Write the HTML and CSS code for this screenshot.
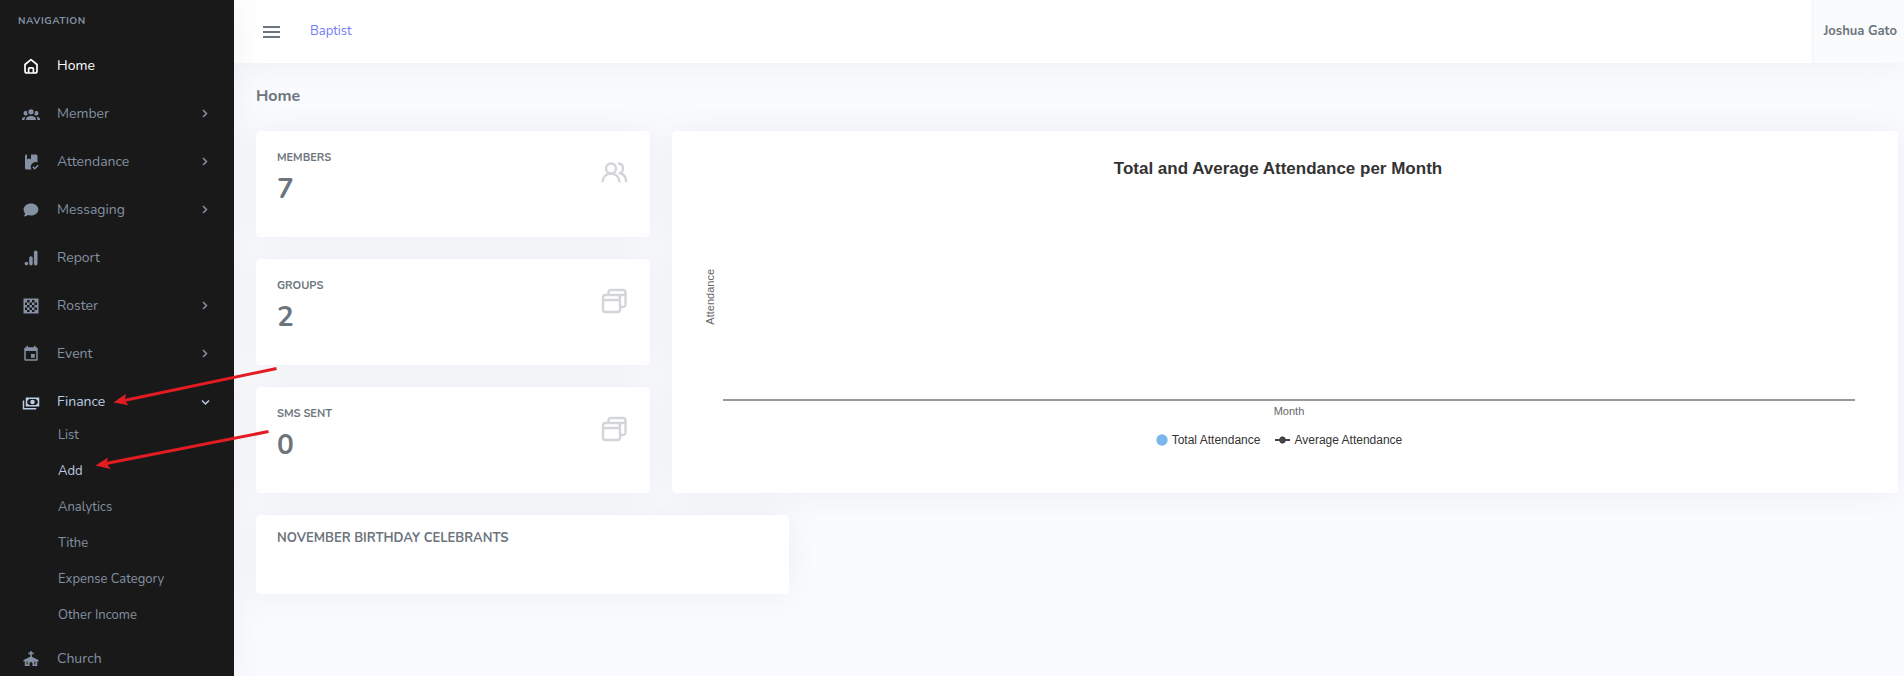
FILE: index.html
```html
<!DOCTYPE html>
<html lang="en">
<head>
<meta charset="utf-8">
<title>Home</title>
<link rel="stylesheet" href="styles.css">
</head>
<body>
<div class="app">
  <nav class="sidebar" aria-label="Navigation">
    <h2 class="nav-title">Navigation</h2>
    <ul class="nav">
      <li><a class="nav-item current" href="#">
        <svg class="icon" viewBox="0 0 18 18" fill="none" stroke="currentColor" stroke-width="1.7" stroke-linejoin="round"><path d="M3 7.500 9 2.600l6 4.900V14a2 2 0 0 1-2 2H5a2 2 0 0 1-2-2z"/><path d="M6.600 16v-4.200a1 1 0 0 1 1-1h2.800a1 1 0 0 1 1 1V16"/></svg>
        <span class="label">Home</span></a></li>
      <li><a class="nav-item" href="#">
        <svg class="icon" viewBox="0 0 24 24" fill="currentColor"><path d="M12 5.500A3.500 3.500 0 0 1 15.500 9 3.500 3.500 0 0 1 12 12.500 3.500 3.500 0 0 1 8.500 9 3.500 3.500 0 0 1 12 5.500M5 8c.56 0 1.080.15 1.530.42-.15 1.430.27 2.850 1.130 3.960C7.160 13.340 6.160 14 5 14a3 3 0 0 1 0-6m14 0a3 3 0 0 1 0 6c-1.160 0-2.160-.66-2.660-1.620.86-1.110 1.280-2.530 1.130-3.960C17.920 8.150 18.440 8 19 8M5.500 18.250c0-2.070 2.910-3.750 6.500-3.750s6.500 1.680 6.500 3.750V20h-13zM0 20v-1.500c0-1.390 1.890-2.560 4.450-2.900-.59.68-.95 1.620-.95 2.650V20zm24 0h-3.500v-1.750c0-1.030-.36-1.970-.95-2.650 2.560.34 4.450 1.510 4.450 2.900z"/></svg>
        <span class="label">Member</span>
        <svg class="chevron" viewBox="0 0 12 12"><path d="m4 2 3.500 3.500L4 9"/></svg></a></li>
      <li><a class="nav-item" href="#">
        <svg class="icon" viewBox="0 0 18 18" fill="currentColor"><path d="M4.500 1.500H5v5l2-1.300 2 1.300v-5h5a1.500 1.500 0 0 1 1.500 1.500v6.300a5 5 0 0 0-6 7.200h-5A1.500 1.500 0 0 1 3 15V3a1.500 1.500 0 0 1 1.500-1.500z"/><path d="m10.800 13.800 1.900 1.900 3.500-3.500" fill="none" stroke="currentColor" stroke-width="1.500"/></svg>
        <span class="label">Attendance</span>
        <svg class="chevron" viewBox="0 0 12 12"><path d="m4 2 3.500 3.500L4 9"/></svg></a></li>
      <li><a class="nav-item" href="#">
        <svg class="icon" viewBox="0 0 18 18" fill="currentColor"><path d="M9 2.500c4.200 0 7.400 2.700 7.400 6s-3.200 6-7.400 6c-1 0-2-.2-2.900-.5-1.100.9-2.600 1.400-4.500 1.500.9-1 1.400-2 1.500-3.100C2.200 11.400 1.600 10 1.600 8.500c0-3.300 3.200-6 7.400-6z"/></svg>
        <span class="label">Messaging</span>
        <svg class="chevron" viewBox="0 0 12 12"><path d="m4 2 3.500 3.500L4 9"/></svg></a></li>
      <li><a class="nav-item" href="#">
        <svg class="icon" viewBox="0 0 18 18" fill="currentColor"><circle cx="4.400" cy="14.600" r="1.800"/><rect x="7.200" y="7.300" width="3.500" height="9.200" rx="1.700"/><rect x="11.900" y="1.500" width="3.600" height="15" rx="1.700"/></svg>
        <span class="label">Report</span></a></li>
      <li><a class="nav-item" href="#">
        <svg class="icon" viewBox="0 0 18 18" fill="currentColor"><path fill-rule="evenodd" d="M1.500 1.500h15v15h-15zM5 3h2.500v2.500H5zM10 3h2.500v2.500H10zM3 5.500h2V8H3zM7.500 5.500H10V8H7.500zM12.500 5.500H15V8h-2.500zM5 8h2.500v2.500H5zM10 8h2.500v2.500H10zM3 10.500h2V13H3zM7.500 10.500H10V13H7.500zM12.500 10.500H15V13h-2.500zM5 13h2.500v2H5zM10 13h2.500v2H10z"/></svg>
        <span class="label">Roster</span>
        <svg class="chevron" viewBox="0 0 12 12"><path d="m4 2 3.500 3.500L4 9"/></svg></a></li>
      <li><a class="nav-item" href="#">
        <svg class="icon" viewBox="0 0 24 24" fill="currentColor"><path d="M19 19H5V8h14M16 1v2H8V1H6v2H5a2 2 0 0 0-2 2v14a2 2 0 0 0 2 2h14a2 2 0 0 0 2-2V5a2 2 0 0 0-2-2h-1V1m-1 11h-5v5h5z"/></svg>
        <span class="label">Event</span>
        <svg class="chevron" viewBox="0 0 12 12"><path d="m4 2 3.500 3.500L4 9"/></svg></a></li>
      <li><a class="nav-item open" href="#" aria-expanded="true">
        <svg class="icon" viewBox="0 0 24 24" fill="currentColor"><path d="M5 6h18v12H5zm9 3a3 3 0 0 1 0 6 3 3 0 0 1 0-6M9 8a2 2 0 0 1-2 2v4a2 2 0 0 1 2 2h10a2 2 0 0 1 2-2v-4a2 2 0 0 1-2-2zm-8 2h2v10h16v2H1z"/></svg>
        <span class="label">Finance</span>
        <svg class="chevron" viewBox="0 0 12 12"><path d="M3 4.500 6.500 8 10 4.500"/></svg></a>
        <ul class="subnav">
          <li><a href="#">List</a></li>
          <li><a class="hover" href="#">Add</a></li>
          <li><a href="#">Analytics</a></li>
          <li><a href="#">Tithe</a></li>
          <li><a href="#">Expense Category</a></li>
          <li><a href="#">Other Income</a></li>
        </ul></li>
      <li><a class="nav-item" href="#">
        <svg class="icon" viewBox="0 0 18 18" fill="currentColor"><path d="M8.200 1h1.600v1.600h1.800v1.600H9.800v2.500l6.700 3.300v1.800l-1.300-.5V16h-4.700v-2.500a1.500 1.500 0 0 0-3 0V16H2.800v-4.700l-1.300.5V10l6.700-3.300V4.200H6.400V2.600h1.800z"/><path d="M4.600 11.500h1v3h-1zM12.400 11.500h1v3h-1z" fill="#191919"/></svg>
        <span class="label">Church</span></a></li>
    </ul>
  </nav>

  <div class="page">
    <header class="topbar">
      <button class="menu-button" type="button" aria-label="Toggle menu">
        <svg viewBox="0 0 17 12" fill="currentColor"><path d="M0 0h17v2H0zm0 5h17v2H0zm0 5h17v2H0z"/></svg>
      </button>
      <a class="brand" href="#">Baptist</a>
      <a class="user" href="#">Joshua Gato</a>
    </header>

    <main class="content">
      <h1 class="page-title">Home</h1>
      <div class="grid">
        <div class="stats">
          <section class="card stat">
            <div><h2 class="stat-title">Members</h2><p class="stat-value">7</p></div>
            <svg class="stat-icon" viewBox="0 0 28 28"><circle cx="11" cy="10.500" r="5"/><path d="M2.500 24.200c0-5 3.800-8.700 8.500-8.700s8.500 3.700 8.500 8.700M17.800 5.500c3.200 0 5.200 2 5.200 5 0 2-1 3.600-2.700 4.500 3.600 1.300 5.900 4.800 5.900 9.200"/></svg>
          </section>
          <section class="card stat">
            <div><h2 class="stat-title">Groups</h2><p class="stat-value">2</p></div>
            <svg class="stat-icon" viewBox="0 0 28 28"><rect x="3" y="9" width="17" height="17" rx="2.500"/><path d="M3 14h17M8.500 9V6.500A2.500 2.500 0 0 1 11 4h12a2.500 2.500 0 0 1 2.500 2.500v12A2.500 2.500 0 0 1 23 21h-3M17 9h8.500"/></svg>
          </section>
          <section class="card stat">
            <div><h2 class="stat-title">SMS sent</h2><p class="stat-value">0</p></div>
            <svg class="stat-icon" viewBox="0 0 28 28"><rect x="3" y="9" width="17" height="17" rx="2.500"/><path d="M3 14h17M8.500 9V6.500A2.500 2.500 0 0 1 11 4h12a2.500 2.500 0 0 1 2.500 2.500v12A2.500 2.500 0 0 1 23 21h-3M17 9h8.500"/></svg>
          </section>
        </div>

        <section class="card chart">
          <h2 class="chart-title">Total and Average Attendance per Month</h2>
          <div class="plot-row">
            <span class="y-title">Attendance</span>
            <div class="plot"></div>
          </div>
          <div class="x-title">Month</div>
          <ul class="legend">
            <li><svg class="mark" viewBox="0 0 12 12"><circle cx="6" cy="6" r="5.700" fill="#7cb5ec"/></svg>Total Attendance</li>
            <li><svg class="mark wide" viewBox="0 0 15 12"><path d="M0 6h15" stroke="#434348" stroke-width="2"/><path d="M7.500 2.200 9.800 3.200 11.300 6 9.800 8.800 7.500 9.800 5.200 8.800 3.700 6 5.200 3.200z" fill="#434348"/></svg>Average Attendance</li>
          </ul>
        </section>

        <section class="card birthdays">
          <h2 class="card-title">November birthday celebrants</h2>
        </section>
      </div>
    </main>
  </div>
</div>

<svg class="arrows" width="290" height="480" viewBox="0 0 290 480" aria-hidden="true">
  <path d="M276.500 368.500 124 400.500M268.500 431.500 106 463.500" fill="none" stroke="#e31b23" stroke-width="3"/>
  <path d="M113.500 402.500 126 393.800 124.500 400.300 128.700 405.300zM95.500 465.500 108 457.600 106.500 463.300 110.500 469z" fill="#e31b23"/>
</svg>
</body>
</html>
```

FILE: styles.css
```css
* {
  box-sizing: border-box;
}

body {
  margin: 0;
  background: #fafbfe;
  color: #6c757d;
  font: 13px/20px Nunito, Lato, sans-serif;
  overflow: hidden;
}

h1, h2, p, ul {
  margin: 0;
  padding: 0;
}

ul {
  list-style: none;
}

a {
  color: inherit;
  text-decoration: none;
}

.app {
  display: flex;
  height: 100vh;
}

/* Sidebar */
.sidebar {
  flex: 0 0 234px;
  overflow: hidden;
  background: #191919;
  color: #8391a2;
  box-shadow: 0 0 32px rgba(154, 161, 171, 0.15);
  z-index: 1;
}

.nav-title {
  padding: 11px 18px;
  font-size: 10px;
  font-weight: 700;
  letter-spacing: 0.5px;
  text-transform: uppercase;
}

.nav-item {
  display: flex;
  align-items: center;
  height: 48px;
  padding: 0 23px 0 22px;
  font-size: 14px;
}

.icon {
  width: 18px;
  height: 18px;
  margin-right: 17px;
}

.label {
  flex: 1;
}

.current {
  color: #ffffff;
}

.open,
.hover {
  color: #bccee4;
}

.chevron {
  width: 12px;
  height: 12px;
  fill: none;
  stroke: currentColor;
  stroke-width: 1.5;
}

.subnav {
  margin: -9px 0 2px;
  padding-left: 58px;
}

.subnav a {
  display: block;
  line-height: 36px;
}

/* Top bar */
.page {
  flex: 1;
  min-width: 0;
}

.topbar {
  display: flex;
  align-items: center;
  height: 63px;
  padding-left: 29px;
  background: #ffffff;
  box-shadow: 0 0 32px rgba(154, 161, 171, 0.15);
}

.menu-button {
  display: flex;
  margin: 0;
  padding: 0;
  border: 0;
  background: none;
  color: #6c757d;
}

.menu-button svg {
  width: 17px;
  height: 12px;
}

.brand {
  margin-left: 30px;
  color: #727cf5;
  line-height: 22px;
  padding-bottom: 2px;
}

.user {
  align-self: stretch;
  margin-left: auto;
  padding: 0 7px 0 11px;
  border-left: 1px solid #f1f3fa;
  background: #fafbfd;
  font-weight: 700;
  line-height: 62px;
}

/* Content */
.content {
  padding: 0 6px 22px 22px;
}

.page-title {
  font-size: 16px;
  font-weight: 700;
  line-height: 66px;
  padding-bottom: 2px;
}

.grid {
  display: grid;
  grid-template-columns: repeat(12, 1fr);
  gap: 22px;
}

.card {
  border-radius: 4px;
  background: #ffffff;
  box-shadow: 0 0 32px rgba(154, 161, 171, 0.15);
}

.stats {
  grid-column: span 3;
  display: grid;
  gap: 22px;
}

.stat {
  display: flex;
  justify-content: space-between;
  min-height: 106px;
  padding: 17px 22px 15px 21px;
}

.stat-title {
  font-size: 11px;
  font-weight: 700;
  text-transform: uppercase;
}

.stat-value {
  font-size: 28px;
  font-weight: 700;
  line-height: 42px;
}

.stat-icon {
  width: 28px;
  height: 28px;
  margin-top: 10px;
  fill: none;
  stroke: #d3d5da;
  stroke-width: 2.4;
}

.birthdays {
  grid-column: span 4;
  min-height: 79px;
  padding: 13px 21px;
}

.card-title {
  font-size: 13px;
  font-weight: 700;
  text-transform: uppercase;
}

/* Chart */
.chart {
  grid-column: span 9;
  display: flex;
  flex-direction: column;
  padding: 28px 34px 43px 32px;
  font-family: "Liberation Sans", Arial, sans-serif;
  font-size: 11px;
  color: #666666;
}

.chart-title {
  padding-right: 12px;
  color: #333333;
  font-size: 17px;
  font-weight: 700;
  text-align: center;
}

.plot-row {
  flex: 1;
  display: flex;
  margin-right: 9px;
}

.y-title {
  width: 12px;
  margin: 0 7px 68px 0;
  padding-top: 8px;
  align-self: flex-end;
  line-height: 12px;
  writing-mode: vertical-rl;
  transform: rotate(180deg);
}

.plot {
  flex: 1;
  border-bottom: 2px solid #999999;
}

.x-title {
  padding-left: 10px;
  text-align: center;
}

.legend {
  display: flex;
  justify-content: center;
  gap: 15px;
  margin-top: 9px;
  padding-right: 10px;
  color: #333333;
  font-size: 12px;
}

.legend li {
  display: flex;
  align-items: center;
  gap: 4px;
}

.mark {
  width: 12px;
  height: 12px;
}

.wide {
  width: 15px;
}

/* Annotation arrows lie over the sidebar and the cards */
.arrows {
  position: absolute;
  top: 0;
  left: 0;
  z-index: 2;
  pointer-events: none;
}
```
